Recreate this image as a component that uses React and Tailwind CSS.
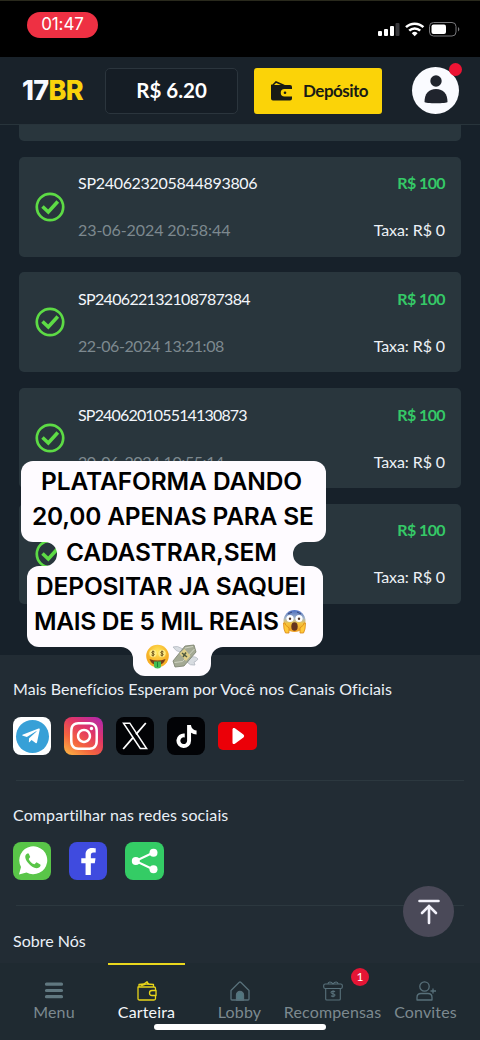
import React from 'react';
import { FaTiktok, FaInstagram, FaFacebookF, FaTelegramPlane } from 'react-icons/fa';

const withdrawals = [
  { id: 'SP240623205844893806', date: '23-06-2024 20:58:44', idClass: 'tracking-[-0.3px]', dateClass: 'tracking-[-0.08px]' },
  { id: 'SP240622132108787384', date: '22-06-2024 13:21:08', idClass: 'tracking-[-0.67px]', dateClass: 'tracking-[-0.42px]' },
  { id: 'SP240620105514130873', date: '20-06-2024 10:55:14', idClass: 'tracking-[-0.83px]', dateClass: 'tracking-[-0.42px]' },
  { id: '', date: '' }
];

function StatusBar() {
  return (
    <div className="flex h-[57px] shrink-0 items-start justify-between border-t border-[#29291c] bg-black pl-[27px] pr-[19px] pt-[11px]">
      <div className="flex h-[26px] w-[71px] items-center justify-center rounded-full bg-[#ee3043] font-[Inter] text-[17px] tracking-[-0.1px] text-white">
        01:47
      </div>
      <svg className="mt-[9px]" width="84" height="18" viewBox="0 0 84 18">
        <g fill="#fff">
          <rect x="1" y="10" width="4" height="5" rx="1" />
          <rect x="7" y="8" width="4" height="7" rx="1" />
          <rect x="13" y="5" width="4" height="10" rx="1" />
          <rect x="18.500" y="2" width="4" height="13" rx="1" fill="#37373a" />
        </g>
        <g fill="none" stroke="#fff" strokeWidth="2.500">
          <path d="M29 6.200a12.500 12.500 0 0 1 17.400 0" />
          <path d="M32.200 9.700a8 8 0 0 1 11 0" />
        </g>
        <path d="M34.800 12.200a4.200 4.200 0 0 1 5.800 0l-2.900 3z" fill="#fff" />
        <rect x="52.500" y="1.500" width="26.500" height="13.500" rx="4" fill="none" stroke="#77777a" />
        <rect x="54.500" y="3.500" width="14.500" height="9.500" rx="2" fill="#fff" />
        <path d="M81 6v4.500c1.800-.8 1.800-3.700 0-4.500z" fill="#77777a" />
      </svg>
    </div>
  );
}

function Header() {
  return (
    <header className="flex h-[68px] shrink-0 items-center border-b border-[#28343b] bg-[#19222a] pl-[22px] pr-[21px]">
      <div className="w-[83px] pt-[2px] font-[Inter] text-[27px] font-extrabold tracking-[-0.7px] text-[#f8faff]">
        17<span className="text-[#f9d20b]">BR</span>
      </div>
      <div className="flex h-[46px] w-[133px] items-center justify-center rounded-[5px] border border-[#2b353d] bg-[#151d25] text-[20.500px] font-bold text-white">
        R$ 6.20
      </div>
      <button className="ml-4 flex h-[46px] w-32 items-center rounded-[3px] bg-[#fbd308] pl-[17px] text-[17px] font-bold tracking-[-0.5px] text-[#191b15]">
        <svg className="mr-[10px]" width="22" height="22" viewBox="0 0 22 22">
          <path d="M1 6l4-4 7 3 2 1" fill="none" stroke="#191b15" strokeWidth="1.500" />
          <path d="M2 5h17a2 2 0 0 1 2 2v2h-7.500a3.700 3.700 0 0 0 0 7.500H21v2a2 2 0 0 1-2 2H2a2 2 0 0 1-2-2V4.500z" fill="#191b15" />
          <path d="M13.500 10.500H21V15h-7.500a2.250 2.250 0 0 1 0-4.500z" fill="#fbd308" />
          <circle cx="14" cy="12.700" r="1.300" fill="#191b15" />
        </svg>
        Depósito
      </button>
      <div className="relative ml-auto h-[47px] w-[47px] rounded-full bg-[#fafbff]">
        <svg width="47" height="47" viewBox="0 0 47 47" fill="#20242d">
          <circle cx="24" cy="14" r="5.700" />
          <path d="M12.500 35c0-8 4-13 11.500-13s11.500 5 11.500 13c0 1.700-23 1.700-23 0z" />
        </svg>
        <span className="absolute -right-[3px] -top-[4px] h-[13px] w-[13px] rounded-full bg-[#ed1434]" />
      </div>
    </header>
  );
}

function WithdrawalCard({ item }) {
  return (
    <div className="flex h-[100px] shrink-0 items-center rounded-[5px] bg-[#29363d] pl-[15px] pr-4">
      <svg width="32" height="32" viewBox="0 0 32 32" fill="none" stroke="#5ddb45">
        <circle cx="16" cy="16" r="13.200" strokeWidth="2.700" />
        <path d="M8.500 15.500l5.800 5.500 9.500-10.500" strokeWidth="3.600" />
      </svg>
      <div className="ml-3 flex flex-1 flex-col gap-[23px] text-[16px] leading-6">
        <div className="flex text-[#f3f6fb]">
          {item.id && <span className={item.idClass}>{item.id}</span>}
          <span className="ml-auto font-bold tracking-[-0.6px] text-[#35c967]">R$ 100</span>
        </div>
        <div className="flex">
          {item.date && <span className={`text-[#7d898f] ${item.dateClass}`}>{item.date}</span>}
          <span className="ml-auto tracking-[-0.1px] text-[#edf1f6]">Taxa: R$ 0</span>
        </div>
      </div>
    </div>
  );
}

function SocialLinks() {
  return (
    <div className="flex items-center gap-[13px]">
      <div className="flex h-[38px] w-[38px] items-center justify-center rounded-[8px] bg-white">
        <div className="flex h-[33px] w-[33px] items-center justify-center rounded-full bg-[#37a0d7]">
          <FaTelegramPlane className="mr-[3px] h-5 w-5 text-white" />
        </div>
      </div>
      <div className="flex h-[38px] w-[39px] items-center justify-center rounded-[8px] bg-[linear-gradient(35deg,#fdbd43_0%,#f4643f_33%,#e23665_62%,#ae27b5_100%)]">
        <FaInstagram className="h-8 w-8 text-white" />
      </div>
      <div className="flex h-[38px] w-[38px] items-center justify-center rounded-[8px] bg-[#020306]">
        <svg width="26" height="28" viewBox="0 0 26 28" fill="none" stroke="#fff">
          <path d="M1.500 1.200h6.300l16.800 25.300h-6.300z" strokeWidth="1.500" />
          <path d="M23.800 1L14 12.300M11 15.600L1.200 27" strokeWidth="1.800" />
        </svg>
      </div>
      <div className="flex h-[38px] w-[38px] items-center justify-center rounded-[8px] bg-[#020306]">
        <FaTiktok className="h-[23px] w-[21px] text-white" />
      </div>
      <svg width="39" height="28" viewBox="0 0 39 28">
        <rect width="39" height="28" rx="5" fill="#eb0008" />
        <path d="M14.500 7.500c0-1.500 1.200-2 2.400-1.200l8.500 6.200c1 .8 1 2.200 0 3l-8.500 6.200c-1.200.8-2.400.2-2.400-1.200z" fill="#fff" />
      </svg>
    </div>
  );
}

function ShareLinks() {
  return (
    <div className="flex items-center gap-[18px]">
      <div className="flex h-[38px] w-[38px] items-center justify-center rounded-[8px] bg-[#59c548]">
        <svg width="32" height="32" viewBox="0 0 32 32">
          <path d="M3 29.500l2-7.500A14 14 0 1 1 10.500 27.500z" fill="#fff" />
          <path d="M11.200 8.500c-2.700 1.500-2.700 5 .8 9.300s8 6.700 11 4.700c1.700-1.100 1.800-2.600 1.300-3.100l-3.800-2.100-2 2c-3.200-1.100-5-3.200-5.800-5.400l1.500-1.800-1.500-3.600z" fill="#59c548" />
        </svg>
      </div>
      <div className="flex h-[38px] w-[38px] items-center justify-center rounded-[8px] bg-[#3f4bdf]">
        <FaFacebookF className="h-[27px] w-[27px] text-white" />
      </div>
      <div className="flex h-[38px] w-[39px] items-center justify-center rounded-[8px] bg-[#34cc65]">
        <svg width="28" height="28" viewBox="0 0 28 28" fill="#fff">
          <path d="M22.500 5.500l-18 8.500 18 8.500" fill="none" stroke="#fff" strokeWidth="2" />
          <circle cx="4.800" cy="14" r="4" />
          <circle cx="22.500" cy="5.700" r="4" />
          <circle cx="22.500" cy="22.300" r="4" />
        </svg>
      </div>
    </div>
  );
}

function MenuIcon() {
  return (
    <svg width="20" height="20" viewBox="0 0 20 20" stroke="#617880" strokeWidth="3.200" strokeLinecap="round">
      <path d="M2.500 3.200h15M2.500 9.500h15M2.500 15.700h15" />
    </svg>
  );
}

function WalletIcon() {
  return (
    <svg width="20" height="20" viewBox="0 0 20 20" fill="none" stroke="#e9d51a" strokeWidth="1.300" strokeLinejoin="round">
      <path d="M1 6h16q1.500 0 1.500 1.500v10q0 1.500-1.500 1.500H2.500Q1 19 1 17.500z" />
      <path d="M2 6V3.500l5-.5 3-2.300 1.500 2.300M3.500 5l6-2 7 .5V6" />
      <path d="M19 9.500h-4a2.500 2.500 0 0 0 0 5h4z" fill="#1f2a31" />
    </svg>
  );
}

function HomeIcon() {
  return (
    <svg width="20" height="20" viewBox="0 0 20 20" fill="none" stroke="#58707a" strokeWidth="1.300" strokeLinejoin="round">
      <path d="M1 9.500l8-8q1-1 2 0l8 8V18q0 1-1 1H2q-1 0-1-1z" />
      <path d="M6.500 19v-5a3.500 3.500 0 0 1 7 0v5z" fill="#527780" />
    </svg>
  );
}

function GiftIcon() {
  return (
    <svg width="20" height="20" viewBox="0 0 20 20" fill="none" stroke="#58707a" strokeWidth="1.100">
      <rect x=".7" y="3" width="18.600" height="4.500" rx="1.500" />
      <path d="M2.700 7.500V18q0 1 1 1h12.600q1 0 1-1V7.500" />
      <path d="M10 3C8 0 5 .5 5 3M10 3c2-3 5-2.500 5 0" />
      <path d="M12 10.800c-1-1-4-.8-4 .7 0 1.700 4 .9 4 2.600 0 1.500-3 1.700-4 .5M10 9.300v7" />
    </svg>
  );
}

function InviteIcon() {
  return (
    <svg width="20" height="20" viewBox="0 0 20 20" fill="none" stroke="#58707a" strokeWidth="1.300">
      <circle cx="8.500" cy="5.500" r="4.700" />
      <path d="M1 19v-2.500Q1 12.500 5 12.500h7q4 0 4 4V19z" strokeLinejoin="round" />
      <path d="M17 7.500v5M14.500 10h5.500" />
    </svg>
  );
}

const tabs = [
  { label: 'Menu', icon: MenuIcon, className: 'w-[108px]' },
  { label: 'Carteira', icon: WalletIcon, className: 'w-[77px]', active: true },
  { label: 'Lobby', icon: HomeIcon, className: 'w-[109px]' },
  { label: 'Recompensas', icon: GiftIcon, className: 'w-[77px]', badge: 1 },
  { label: 'Convites', icon: InviteIcon, className: 'w-[109px]' }
];

function TabBar() {
  return (
    <nav className="relative flex h-[77px] shrink-0 bg-[#1f2a31]">
      {tabs.map((tab) => {
        const Icon = tab.icon;
        return (
          <div
            key={tab.label}
            className={`relative flex shrink-0 flex-col items-center border-t-2 pt-4 ${tab.className} ${
              tab.active ? 'border-[#ead71d] text-[#f5f7fa]' : 'border-transparent text-[#7c898f]'
            }`}
          >
            <Icon />
            <span className="whitespace-nowrap text-[16px] leading-[21px] tracking-[0.15px]">{tab.label}</span>
            {tab.badge && (
              <span className="absolute left-[57px] top-[3px] flex h-[18px] w-[18px] items-center justify-center rounded-full bg-[#e51535] text-[12px] text-white">
                {tab.badge}
              </span>
            )}
          </div>
        );
      })}
      <div className="absolute bottom-[10px] left-[154px] h-[6px] w-[172px] rounded-full bg-white" />
    </nav>
  );
}

// Inverted corner used where two blocks of the caption meet
function InnerCorner({ className }) {
  return (
    <svg className={`h-3 w-3 ${className}`} viewBox="0 0 12 12" fill="#fefbff">
      <path d="M0 0h12v12A12 12 0 0 0 0 0z" />
    </svg>
  );
}

function ScreamEmoji() {
  return (
    <svg className="ml-[3px] inline-block align-[-4px]" width="25" height="25" viewBox="0 0 25 25">
      <defs>
        <linearGradient id="scream" x2="0" y2="1">
          <stop offset=".05" stopColor="#5375c4" />
          <stop offset=".38" stopColor="#a7b7c8" />
          <stop offset=".62" stopColor="#f5c43c" />
          <stop offset="1" stopColor="#ef9d20" />
        </linearGradient>
      </defs>
      <circle cx="12.500" cy="12" r="11" fill="url(#scream)" />
      <path d="M6 5l4-2M15 3l4 2" stroke="#354679" />
      <circle cx="8" cy="9.500" r="3.600" fill="#fff" />
      <circle cx="17" cy="9.500" r="3.600" fill="#fff" />
      <circle cx="8" cy="9.700" r="1.200" fill="#51382b" />
      <circle cx="17" cy="9.700" r="1.200" fill="#51382b" />
      <ellipse cx="12.500" cy="17.500" rx="3.200" ry="4.300" fill="#66341e" />
      <path d="M1.500 14q2-1 2 2l3.500 3v5H3.500Q1.500 21 1.500 14zM23.500 14q-2-1-2 2L18 19v5h3.500q2-3 2-10z" fill="#ffc939" stroke="#d98515" strokeWidth=".8" />
    </svg>
  );
}

function MoneyFaceEmoji() {
  return (
    <svg width="25" height="25" viewBox="0 0 25 25">
      <defs>
        <radialGradient id="face" cy=".3">
          <stop stopColor="#ffe65a" />
          <stop offset="1" stopColor="#f6ae24" />
        </radialGradient>
      </defs>
      <circle cx="12.500" cy="12" r="11.300" fill="url(#face)" />
      <circle cx="8" cy="9.500" r="3.700" fill="#ffec83" />
      <circle cx="17" cy="9.500" r="3.700" fill="#ffec83" />
      <path d="M9.500 8c-2-1.500-4 .8-1.500 1.500s.5 3-1.500 1.500M8 6.500v6M18.500 8c-2-1.500-4 .8-1.500 1.500s.5 3-1.500 1.500M17 6.500v6" fill="none" stroke="#604514" strokeWidth=".9" />
      <path d="M4.500 15q8 3 16 0-2 6-8 6t-8-6z" fill="#763f19" />
      <path d="M9 17.500h7V22q0 2.500-3.500 2.500T9 22z" fill="#42bd55" />
      <path d="M12.500 18v5" stroke="#1d803a" />
    </svg>
  );
}

function FlyingMoneyEmoji() {
  return (
    <svg width="27" height="25" viewBox="0 0 27 25">
      <path d="M9 8Q4 8 1 3q4-2 10 2zM17 14q6-3 9 1-2 3-4 3l1 3q-5 1-8-3z" fill="#d8dce1" stroke="#aeb3bb" strokeWidth=".7" />
      <path d="M13 2l9-1 2 7-12 14-9 1-2-6z" fill="#a4a994" stroke="#777d6b" strokeWidth=".8" />
      <path d="M13 4l8-1.500M2.500 18.500l8-1L22.500 5" fill="none" stroke="#d0d3c2" />
      <path d="M7.500 9.500l5-4.500 6 7-4.500 5z" fill="#dfce87" />
      <path d="M10 9l5 4M14 8.500l-3 4.500" stroke="#4d5940" strokeWidth="1.500" />
    </svg>
  );
}

function Caption() {
  return (
    <div className="absolute left-[21px] top-[461px] w-[305px] whitespace-nowrap font-[Inter] text-[24.500px] font-semibold leading-[35px] text-black">
      <div className="h-[81px] rounded-[12px] bg-[#fefbff] pt-[3px]">
        <div className="pl-5 tracking-[-0.1px]">PLATAFORMA DANDO</div>
        <div className="pl-[11px] tracking-[-0.2px]">20,00 APENAS PARA SE</div>
      </div>
      <div className="relative ml-9 h-6 w-[236px] bg-[#fefbff]">
        <InnerCorner className="absolute -left-3 top-0" />
        <InnerCorner className="absolute -left-3 bottom-0 -scale-y-100" />
        <InnerCorner className="absolute -right-3 top-0 -scale-x-100" />
        <InnerCorner className="absolute -right-3 bottom-0 -scale-100" />
        <div className="-translate-y-[7px] pl-[9px] tracking-[-0.15px]">CADASTRAR,SEM</div>
      </div>
      <div className="ml-[6px] h-[81px] w-[296px] rounded-[12px] bg-[#fefbff] pt-[3px]">
        <div className="pl-[9px] tracking-[-0.15px]">DEPOSITAR JA SAQUEI</div>
        <div className="pl-[7px] tracking-[-0.3px]">
          MAIS DE 5 MIL REAIS
          <ScreamEmoji />
        </div>
      </div>
      <div className="relative ml-[112px] flex h-[29px] w-[78px] justify-center rounded-b-[12px] bg-[#fefbff]">
        <InnerCorner className="absolute -left-3 top-0" />
        <InnerCorner className="absolute -right-3 top-0 -scale-x-100" />
        <div className="-mt-[3px] flex gap-[2px]">
          <MoneyFaceEmoji />
          <FlyingMoneyEmoji />
        </div>
      </div>
    </div>
  );
}

export default function App() {
  return (
    <div className="relative flex h-[1040px] w-[480px] flex-col overflow-hidden bg-[#17212a] font-[Lato,sans-serif]">
      <StatusBar />
      <Header />

      <main className="flex h-[838px] shrink-0 flex-col overflow-hidden">
        <section className="flex h-[530px] shrink-0 flex-col gap-[15.700px] pl-[19px] pr-[19px]">
          <div className="h-4 shrink-0 rounded-b-[5px] bg-[#29363d]" />
          {withdrawals.map((item, index) => (
            <WithdrawalCard key={index} item={item} />
          ))}
        </section>

        <footer className="flex-1 bg-[#222c34] px-[13px] pt-[22px] text-[16px] leading-6 text-[#eaf0f7]">
          <p className="tracking-[0.05px]">Mais Benefícios Esperam por Você nos Canais Oficiais</p>
          <div className="mt-4">
            <SocialLinks />
          </div>
          <hr className="mx-[3px] mt-[25px] border-[#2c383f]" />
          <p className="mt-[22px] tracking-[0.12px]">Compartilhar nas redes sociais</p>
          <div className="mt-[15px]">
            <ShareLinks />
          </div>
          <hr className="mx-[3px] mt-[25px] border-[#2c383f]" />
          <p className="mt-[23px]">Sobre Nós</p>
        </footer>
      </main>

      <TabBar />
      <Caption />

      <button className="absolute left-[403px] top-[886px] flex h-[51px] w-[51px] items-center justify-center rounded-full bg-[#4a4958]">
        <svg width="24" height="28" viewBox="0 0 24 28" fill="none" stroke="#f2f1fa" strokeWidth="2.600" strokeLinecap="round">
          <path d="M2.500 3h19M12 25V8.500M5 15l7-7 7 7" />
        </svg>
      </button>
    </div>
  );
}
